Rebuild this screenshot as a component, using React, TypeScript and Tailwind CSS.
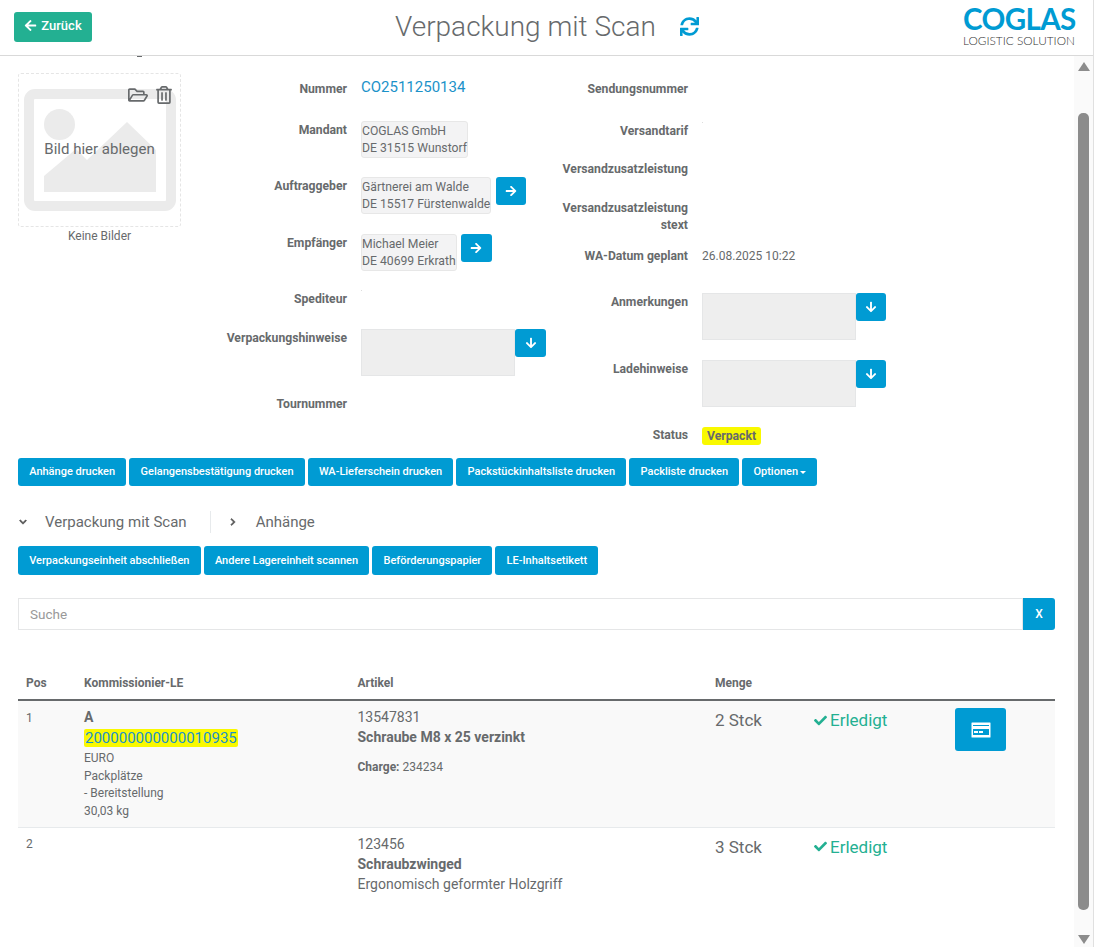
import { FaArrowDown, FaArrowLeft, FaArrowRight, FaCheck, FaChevronDown, FaChevronRight, FaRegFolderOpen, FaRegTrashAlt, FaSync } from 'react-icons/fa';
import type { ReactNode } from 'react';

function Label({ children }: { children: ReactNode }) {
  return <div className="shrink-0 text-right text-[12.2px] font-bold leading-[17px] pt-px text-[#676a6c]">{children}</div>;
}

function AddressBox({ lines }: { lines: string[] }) {
  return (
    <div className="h-[37px] bg-[#f3f3f4] border border-[#e7e7e7] rounded-[3px] text-[12.2px] leading-[17px] pt-px whitespace-nowrap text-[#676a6c]">
      {lines.map((line) => (
        <div key={line}>{line}</div>
      ))}
    </div>
  );
}

function IconButton({ children, narrow = false }: { children: ReactNode; narrow?: boolean }) {
  return (
    <button className={`${narrow ? 'w-[30px]' : 'w-[31px]'} h-7 shrink-0 bg-[#009bd3] rounded-[3px] text-white flex items-center justify-center text-[12px]`}>
      {children}
    </button>
  );
}

function NoteBox({ narrow = false }: { narrow?: boolean }) {
  return (
    <div className="flex items-start">
      <div className="w-[154px] h-[47px] bg-[#eeeeee] border border-[#e5e6e7]" />
      <IconButton narrow={narrow}>
        <FaArrowDown />
      </IconButton>
    </div>
  );
}

function Dot() {
  return <div className="w-px h-px bg-[#dddddd]" />;
}

function Btn({ children, tall = false }: { children: ReactNode; tall?: boolean }) {
  return (
    <button className={`${tall ? 'h-[29px]' : 'h-7'} px-[11.2px] pt-px bg-[#009bd3] rounded-[3px] text-white text-[11px] font-medium whitespace-nowrap flex items-center`}>
      {children}
    </button>
  );
}

function ImageDrop() {
  return (
    <div className="w-[163px]">
      <div className="relative h-[154px] border border-dashed border-[#e5e5e5] rounded-[3px]">
        <svg className="absolute left-[5px] top-[15px]" width="153" height="123" viewBox="0 0 153 123">
          <rect x="5" y="5" width="142" height="112" rx="6" fill="none" stroke="#ebebeb" strokeWidth="10" />
          <circle cx="35.5" cy="35.5" r="15.5" fill="#ebebeb" />
          <path d="M20 87 L52 60 L63 71 L103 33 L132 61 V103 H20 Z" fill="#ebebeb" />
        </svg>
        <div className="absolute inset-x-0 top-[65px] text-center text-[15px] leading-5 text-[#676a6c]">Bild hier ablegen</div>
        <FaRegFolderOpen className="absolute left-[109px] top-[11px] text-[#676a6c] text-[20px]" />
        <FaRegTrashAlt className="absolute left-[136px] top-[12px] text-[#676a6c] text-[18px]" />
      </div>
      <div className="text-center text-xs leading-[17px] mt-[1px] text-[#676a6c]">Keine Bilder</div>
    </div>
  );
}

export default function App() {
  return (
    <div className="w-[1097px] h-[947px] overflow-hidden bg-white flex font-['Roboto',sans-serif] text-[#676a6c]">
      <div className="w-[1094px] flex flex-col border-r border-[#e0e0e0] shrink-0">
        <header className="h-[56px] shrink-0 border-b border-[#d9d9d9] flex items-start relative">
          <button className="ml-[14px] mt-3 h-[30px] w-[78px] bg-[#23b092] rounded-[3px] text-white text-[13px] font-medium flex items-center justify-center gap-1 pb-[3px]">
            <FaArrowLeft className="text-[13px]" />
            Zurück
          </button>
          <h1 className="ml-[303px] mt-[9px] text-[28px] leading-9 font-light text-[#676a6c] whitespace-nowrap">Verpackung mit Scan</h1>
          <FaSync className="ml-[24px] mt-[17px] text-[#009bd3] text-[19px]" />
          <div className="ml-auto mr-[17px] mt-[3px] w-[113px] flex flex-col items-stretch">
            <div className="font-['Lato',sans-serif] font-bold text-[29.5px] leading-[32px] text-[#009bd3] tracking-[-0.6px] whitespace-nowrap">COGLAS</div>
            <div className="font-['Lato',sans-serif] font-light text-[11.8px] leading-3 text-[#333333] whitespace-nowrap">LOGISTIC SOLUTION</div>
          </div>
        </header>

        <div className="flex flex-1 min-h-0">
          <main className="w-[1074px] px-[18px] overflow-hidden">
            <div className="h-px w-[5px] ml-[119px] bg-[#676a6c]" />
            <div className="flex">
              <div className="pt-4">
                <ImageDrop />
              </div>

              {/* left form column */}
              <div className="ml-[3px] w-[363px] pt-[23px]">
                <div className="flex h-[41px]">
                  <div className="w-[163px]"><Label>Nummer</Label></div>
                  <div className="ml-[14px] text-[15px] leading-[15px] text-[#1b92c9]">CO2511250134</div>
                </div>
                <div className="flex h-[56px]">
                  <div className="w-[163px]"><Label>Mandant</Label></div>
                  <div className="ml-[14px]"><AddressBox lines={['COGLAS GmbH', 'DE 31515 Wunstorf']} /></div>
                </div>
                <div className="flex h-[57px]">
                  <div className="w-[163px]"><Label>Auftraggeber</Label></div>
                  <div className="ml-[14px] flex items-start gap-[5px]">
                    <AddressBox lines={['Gärtnerei am Walde', 'DE 15517 Fürstenwalde']} />
                    <IconButton narrow><FaArrowRight /></IconButton>
                  </div>
                </div>
                <div className="flex h-[56px]">
                  <div className="w-[163px]"><Label>Empfänger</Label></div>
                  <div className="ml-[14px] flex items-start gap-[4px]">
                    <AddressBox lines={['Michael Meier', 'DE 40699 Erkrath']} />
                    <IconButton><FaArrowRight /></IconButton>
                  </div>
                </div>
                <div className="flex h-[39px]">
                  <div className="w-[163px]"><Label>Spediteur</Label></div>
                  <div className="ml-[14px]"><Dot /></div>
                </div>
                <div className="flex h-[66px]">
                  <div className="w-[163px]"><Label>Verpackungshinweise</Label></div>
                  <div className="ml-[14px]"><NoteBox /></div>
                </div>
                <div className="flex">
                  <div className="w-[163px]"><Label>Tournummer</Label></div>
                </div>
              </div>

              {/* right form column */}
              <div className="pt-[23px]">
                <div className="flex h-[42px]">
                  <div className="w-[141px]"><Label>Sendungsnummer</Label></div>
                </div>
                <div className="flex h-[38px]">
                  <div className="w-[141px]"><Label>Versandtarif</Label></div>
                  <div className="ml-[14px]"><Dot /></div>
                </div>
                <div className="flex h-[39px]">
                  <div className="w-[141px]"><Label>Versandzusatzleistung</Label></div>
                </div>
                <div className="flex h-[48px]">
                  <div className="w-[141px]"><Label>Versandzusatzleistung<br />stext</Label></div>
                </div>
                <div className="flex h-[46px]">
                  <div className="w-[141px]"><Label>WA-Datum geplant</Label></div>
                  <div className="ml-[14px] text-xs leading-[17px] pt-px">26.08.2025 10:22</div>
                </div>
                <div className="flex h-[67px]">
                  <div className="w-[141px]"><Label>Anmerkungen</Label></div>
                  <div className="ml-[14px]"><NoteBox narrow /></div>
                </div>
                <div className="flex h-[66px]">
                  <div className="w-[141px]"><Label>Ladehinweise</Label></div>
                  <div className="ml-[14px]"><NoteBox narrow /></div>
                </div>
                <div className="flex h-[32px]">
                  <div className="w-[141px]"><Label>Status</Label></div>
                  <div className="ml-[14px] pt-px">
                    <span className="block h-[18px] px-[5px] bg-[#f9f900] rounded-[3px] text-[12.2px] font-bold leading-[18px]">Verpackt</span>
                  </div>
                </div>
              </div>
            </div>

            <div className="flex gap-[3px]">
              <Btn>Anhänge drucken</Btn>
              <Btn>Gelangensbestätigung drucken</Btn>
              <Btn>WA-Lieferschein drucken</Btn>
              <Btn>Packstückinhaltsliste drucken</Btn>
              <Btn>Packliste drucken</Btn>
              <Btn>
                Optionen
                <span className="ml-[2px] border-x-[3px] border-t-[3px] border-x-transparent border-t-white" />
              </Btn>
            </div>

            <div className="flex items-center h-[22px] mt-[25px]">
              <FaChevronDown className="text-[8px] ml-[1px] text-[#555555]" strokeWidth={40} />
              <span className="ml-[18px] text-[15px] leading-5">Verpackung mit Scan</span>
              <div className="ml-[23px] h-[22px] w-px bg-[#e7eaec]" />
              <FaChevronRight className="text-[8px] ml-[18px] text-[#555555]" strokeWidth={40} />
              <span className="ml-[19px] text-[15px] leading-5">Anhänge</span>
            </div>

            <div className="flex gap-[3px] mt-[13px]">
              <Btn tall>Verpackungseinheit abschließen</Btn>
              <Btn tall>Andere Lagereinheit scannen</Btn>
              <Btn tall>Beförderungspapier</Btn>
              <Btn tall>LE-Inhaltsetikett</Btn>
            </div>

            <div className="flex mt-[23px] w-[1037px]">
              <div className="flex-1 h-8 border border-[#e5e6e7] pl-[11px] text-[13.5px] leading-[31px] text-[#999999]">Suche</div>
              <button className="w-8 h-8 bg-[#009bd3] rounded-r-[3px] text-white text-xs font-medium">X</button>
            </div>

            <table className="w-[1037px] mt-[37px] table-fixed border-collapse">
              <colgroup>
                <col className="w-[58px]" />
                <col className="w-[274px]" />
                <col className="w-[357px]" />
                <col className="w-[99px]" />
                <col className="w-[141px]" />
                <col className="w-[108px]" />
              </colgroup>
              <thead>
                <tr className="h-[33px] border-b-2 border-[#676a6c] text-xs font-bold text-left">
                  <th className="px-2">Pos</th>
                  <th className="px-2">Kommissionier-LE</th>
                  <th className="px-2 pl-[7.5px]">Artikel</th>
                  <th className="px-2">Menge</th>
                  <th />
                  <th />
                </tr>
              </thead>
              <tbody>
                <tr className="h-[127px] bg-[#f9f9f9] border-b border-[#e7eaec] align-top">
                  <td className="px-2 pt-[9px] text-xs leading-[17px]">1</td>
                  <td className="px-2 pt-[7px]">
                    <div className="text-sm font-bold leading-[18px]">A</div>
                    <div className="mt-[3px] leading-[18px]">
                      <span className="inline-block px-px h-[18px] bg-[#f9f900] rounded-[2px] text-[15px] leading-[18px] text-[#1b92c9]">200000000000010935</span>
                    </div>
                    <div className="text-xs leading-[17.5px] mt-[3px]">
                      <div>EURO</div>
                      <div>Packplätze</div>
                      <div>- Bereitstellung</div>
                      <div>30,03 kg</div>
                    </div>
                  </td>
                  <td className="px-2 pl-[7.5px] pt-[6px]">
                    <div className="text-sm leading-5">13547831</div>
                    <div className="text-sm font-bold leading-5">Schraube M8 x 25 verzinkt</div>
                    <div className="text-xs leading-[17px] mt-[12px]"><b>Charge:</b> 234234</div>
                  </td>
                  <td className="px-2 pt-2 text-[17px] leading-[22px]">2 Stck</td>
                  <td className="px-2 pt-2 text-[17px] leading-[22px] text-[#23b092]">
                    <span className="flex items-center gap-[3px]"><FaCheck className="text-[13px]" />Erledigt</span>
                  </td>
                  <td className="px-2 pt-[7px]">
                    <button className="w-[51px] h-[43px] bg-[#009bd3] rounded-[3px] flex items-center justify-center">
                      <svg width="20" height="16" viewBox="0 0 20 16">
                        <path d="M0.5 1a.5.5 0 0 1 .5-.5h18a.5.5 0 0 1 .5.5v14a.5.5 0 0 1-.5.5h-18a.5.5 0 0 1-.5-.5z" fill="white" />
                        <rect x="2" y="3" width="16" height="1" fill="#009bd3" />
                        <rect x="2" y="7" width="16" height="6" fill="#009bd3" />
                        <rect x="3" y="9" width="4" height="2" fill="white" />
                        <rect x="8" y="9" width="4" height="2" fill="white" />
                      </svg>
                    </button>
                  </td>
                </tr>
                <tr className="align-top">
                  <td className="px-2 pt-[8px] text-xs leading-[17px]">2</td>
                  <td />
                  <td className="px-2 pl-[7.5px] pt-[6px] text-sm leading-5">
                    <div>123456</div>
                    <div className="font-bold">Schraubzwinged</div>
                    <div>Ergonomisch geformter Holzgriff</div>
                  </td>
                  <td className="px-2 pt-[8px] text-[17px] leading-[22px]">3 Stck</td>
                  <td className="px-2 pt-[8px] text-[17px] leading-[22px] text-[#23b092]">
                    <span className="flex items-center gap-[3px]"><FaCheck className="text-[13px]" />Erledigt</span>
                  </td>
                  <td />
                </tr>
              </tbody>
            </table>
          </main>

          {/* scrollbar */}
          <div className="w-[19px] bg-[#fafafa] flex flex-col items-center pt-[6px]">
            <span className="shrink-0 border-x-[6px] border-b-[9px] border-x-transparent border-b-[#8c8c8c]" />
            <div className="shrink-0 mt-[42px] w-[11px] h-[797px] rounded-[5px] bg-[#8c8c8c]" />
            <span className="shrink-0 mt-[25px] border-x-[6px] border-t-[9px] border-x-transparent border-t-[#8c8c8c]" />
          </div>
        </div>
      </div>
    </div>
  );
}
